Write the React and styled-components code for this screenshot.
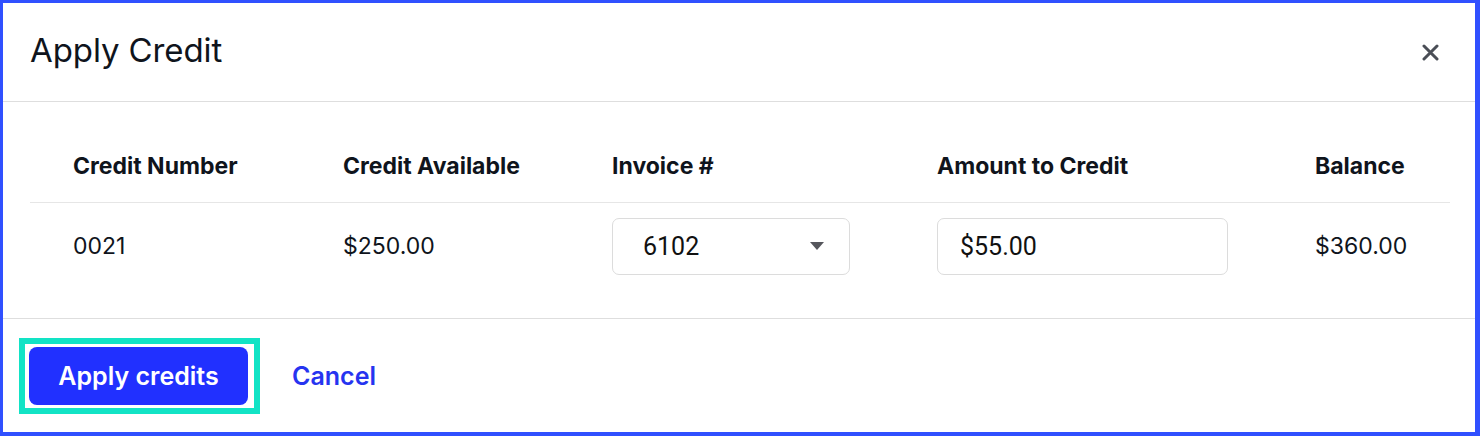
import React from "react";
import styled, { createGlobalStyle } from "styled-components";

const GlobalStyle = createGlobalStyle`
  html, body {
    margin: 0;
    padding: 0;
    background: #ffffff;
  }
  body {
    font-family: Inter, "Noto Sans", sans-serif;
    color: #0f141c;
  }
`;

const Frame = styled.div`
  width: 1480px;
  height: 436px;
  box-sizing: border-box;
  border-style: solid;
  border-color: #3050ff;
  border-width: 3px 5px 4px 3px;
  display: flex;
  flex-direction: column;
  background: #fff;
`;

const Header = styled.div`
  height: 98px;
  flex: none;
  display: flex;
  align-items: center;
  justify-content: space-between;
  padding: 0 33px 0 27px;
  border-bottom: 1px solid #dedede;
`;

const Title = styled.h2`
  margin: 0 0 4px;
  font-size: 33px;
  font-weight: 400;
  letter-spacing: -0.1px;
  color: #0f141c;
`;

const CloseButton = styled.button`
  width: 24px;
  height: 24px;
  padding: 0;
  border: none;
  background: transparent;
  display: flex;
  align-items: center;
  justify-content: center;
  cursor: pointer;
`;

const Body = styled.div`
  flex: none;
  padding: 28px 25px 29px 27px;
  border-bottom: 1px solid #dedede;
`;

const Row = styled.div`
  display: grid;
  grid-template-columns: 270px 269px 325px 378px 178px;
  align-items: center;
  height: ${(p) => p.$height}px;
  border-bottom: ${(p) => (p.$divider ? "1px solid #e6e6e6" : "none")};
`;

const HeadCell = styled.div`
  padding-left: 43px;
  font-size: 23px;
  font-weight: 700;
  color: #0f141c;
`;

const Cell = styled.div`
  padding-left: 43px;
  font-size: 23px;
  font-weight: 400;
  color: #0f141c;
`;

const SelectBox = styled.div`
  width: 238px;
  height: 57px;
  box-sizing: border-box;
  border: 1px solid #dcdcdc;
  border-radius: 7px;
  display: flex;
  align-items: center;
  justify-content: space-between;
  padding: 0 25px 0 30px;
  font-family: Roboto, "Liberation Sans", sans-serif;
  font-size: 25px;
  color: #111;
`;

const Caret = styled.span`
  width: 0;
  height: 0;
  border-left: 7px solid transparent;
  border-right: 7px solid transparent;
  border-top: 8px solid #55565c;
`;

const TextInput = styled.input`
  width: 291px;
  height: 57px;
  box-sizing: border-box;
  border: 1px solid #dcdcdc;
  border-radius: 7px;
  padding: 0 22px;
  font-family: Roboto, "Liberation Sans", sans-serif;
  font-size: 25px;
  color: #111;
  outline: none;
  background: #fff;
`;

const Footer = styled.div`
  flex: 1;
  display: flex;
  align-items: center;
  padding-left: 16px;
  gap: 32px;
`;

const FocusRing = styled.span`
  display: inline-flex;
  border: 6px solid #12e3c5;
  padding: 3px 6px 3px 4px;
`;

const PrimaryButton = styled.button`
  width: 219px;
  height: 58px;
  border: none;
  border-radius: 8px;
  background: #2130ff;
  color: #fff;
  font-family: Inter, "Noto Sans", sans-serif;
  font-size: 25px;
  font-weight: 600;
  cursor: pointer;
`;

const LinkButton = styled.button`
  border: none;
  background: transparent;
  padding: 0;
  color: #2634f0;
  font-family: Inter, "Noto Sans", sans-serif;
  font-size: 25px;
  font-weight: 600;
  cursor: pointer;
`;

const columns = [
  "Credit Number",
  "Credit Available",
  "Invoice #",
  "Amount to Credit",
  "Balance",
];

export default function App() {
  return (
    <>
      <GlobalStyle />
      <Frame>
        <Header>
          <Title>Apply Credit</Title>
          <CloseButton aria-label="Close">
            <svg width="17" height="17" viewBox="0 0 17 17">
              <path
                d="M2 2 L15 15 M15 2 L2 15"
                stroke="#4a4e56"
                strokeWidth="3"
                strokeLinecap="round"
              />
            </svg>
          </CloseButton>
        </Header>
        <Body>
          <Row $height={72} $divider>
            {columns.map((c) => (
              <HeadCell key={c}>{c}</HeadCell>
            ))}
          </Row>
          <Row $height={86}>
            <Cell>0021</Cell>
            <Cell>$250.00</Cell>
            <Cell>
              <SelectBox>
                <span>6102</span>
                <Caret />
              </SelectBox>
            </Cell>
            <Cell>
              <TextInput defaultValue="$55.00" />
            </Cell>
            <Cell>$360.00</Cell>
          </Row>
        </Body>
        <Footer>
          <FocusRing>
            <PrimaryButton>Apply credits</PrimaryButton>
          </FocusRing>
          <LinkButton>Cancel</LinkButton>
        </Footer>
      </Frame>
    </>
  );
}
